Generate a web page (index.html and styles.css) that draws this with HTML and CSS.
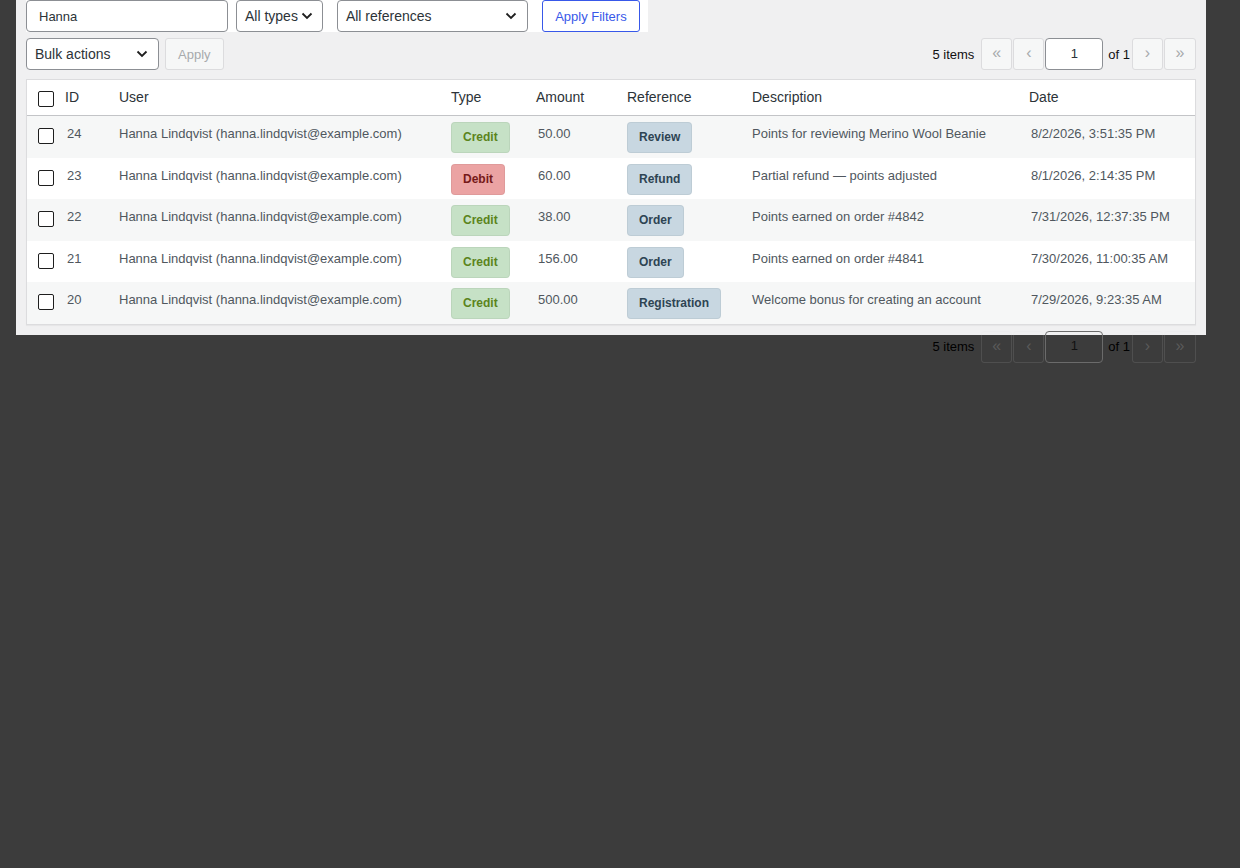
FILE: index.html
```html
<!DOCTYPE html>
<html>
<head>
    <meta charset="UTF-8">
    <meta name="viewport" content="width=device-width, initial-scale=1.0">
    <title>Points Transactions</title>
    <link rel="stylesheet" href="styles.css">
</head>
<body>
    <div class="wrap">
        <form class="filters">
            <input type="text" class="search" value="Hanna">
            <div class="select types">
                <span>All types</span>
                <svg width="12" height="8" viewBox="0 0 12 8"><path d="M1.5 1.5 L6 6 L10.5 1.5" fill="none" stroke="#1e1e1e" stroke-width="1.8"/></svg>
            </div>
            <div class="select refs">
                <span>All references</span>
                <svg width="12" height="8" viewBox="0 0 12 8"><path d="M1.5 1.5 L6 6 L10.5 1.5" fill="none" stroke="#1e1e1e" stroke-width="1.8"/></svg>
            </div>
            <button type="button" class="filter-btn">Apply Filters</button>
        </form>

        <div class="tablenav">
            <div class="bulk">
                <div class="select bulk-select">
                    <span>Bulk actions</span>
                    <svg width="12" height="8" viewBox="0 0 12 8"><path d="M1.5 1.5 L6 6 L10.5 1.5" fill="none" stroke="#1e1e1e" stroke-width="1.8"/></svg>
                </div>
                <button type="button" class="apply">Apply</button>
            </div>
            <div class="pages">
                <span class="count">5 items</span>
                <span class="nav-btn">&laquo;</span>
                <span class="nav-btn">&lsaquo;</span>
                <input type="text" class="page-input" value="1">
                <span class="of">of 1</span>
                <span class="nav-btn">&rsaquo;</span>
                <span class="nav-btn last">&raquo;</span>
            </div>
        </div>

        <table class="list">
            <colgroup>
                <col style="width: 30px">
                <col style="width: 52px">
                <col style="width: 332px">
                <col style="width: 87px">
                <col style="width: 89px">
                <col style="width: 125px">
                <col style="width: 279px">
                <col>
            </colgroup>
            <thead>
                <tr>
                    <th class="check-column"><input type="checkbox"></th>
                    <th class="sortable">ID</th>
                    <th>User</th>
                    <th>Type</th>
                    <th class="sortable">Amount</th>
                    <th>Reference</th>
                    <th>Description</th>
                    <th class="sortable">Date</th>
                </tr>
            </thead>
            <tbody>
                <tr>
                    <td class="check-column"><input type="checkbox"></td>
                    <td>24</td>
                    <td>Hanna Lindqvist (hanna.lindqvist@example.com)</td>
                    <td><span class="badge credit">Credit</span></td>
                    <td>50.00</td>
                    <td><span class="badge ref">Review</span></td>
                    <td>Points for reviewing Merino Wool Beanie</td>
                    <td>8/2/2026, 3:51:35 PM</td>
                </tr>
                <tr>
                    <td class="check-column"><input type="checkbox"></td>
                    <td>23</td>
                    <td>Hanna Lindqvist (hanna.lindqvist@example.com)</td>
                    <td><span class="badge debit">Debit</span></td>
                    <td>60.00</td>
                    <td><span class="badge ref">Refund</span></td>
                    <td>Partial refund &mdash; points adjusted</td>
                    <td>8/1/2026, 2:14:35 PM</td>
                </tr>
                <tr>
                    <td class="check-column"><input type="checkbox"></td>
                    <td>22</td>
                    <td>Hanna Lindqvist (hanna.lindqvist@example.com)</td>
                    <td><span class="badge credit">Credit</span></td>
                    <td>38.00</td>
                    <td><span class="badge ref">Order</span></td>
                    <td>Points earned on order #4842</td>
                    <td>7/31/2026, 12:37:35 PM</td>
                </tr>
                <tr>
                    <td class="check-column"><input type="checkbox"></td>
                    <td>21</td>
                    <td>Hanna Lindqvist (hanna.lindqvist@example.com)</td>
                    <td><span class="badge credit">Credit</span></td>
                    <td>156.00</td>
                    <td><span class="badge ref">Order</span></td>
                    <td>Points earned on order #4841</td>
                    <td>7/30/2026, 11:00:35 AM</td>
                </tr>
                <tr>
                    <td class="check-column"><input type="checkbox"></td>
                    <td>20</td>
                    <td>Hanna Lindqvist (hanna.lindqvist@example.com)</td>
                    <td><span class="badge credit">Credit</span></td>
                    <td>500.00</td>
                    <td><span class="badge ref">Registration</span></td>
                    <td>Welcome bonus for creating an account</td>
                    <td>7/29/2026, 9:23:35 AM</td>
                </tr>
            </tbody>
        </table>

        <div class="tablenav bottom">
            <div class="pages">
                <span class="count">5 items</span>
                <span class="nav-btn">&laquo;</span>
                <span class="nav-btn">&lsaquo;</span>
                <input type="text" class="page-input" value="1">
                <span class="of">of 1</span>
                <span class="nav-btn">&rsaquo;</span>
                <span class="nav-btn last">&raquo;</span>
            </div>
        </div>
    </div>
</body>
</html>
```

FILE: styles.css
```css
html {
    min-height: 100%;
    background-color: #3c3c3c;
}
body {
    margin: 0;
    min-height: 868px;
    background-color: #3c3c3c;
    font-family: "Liberation Sans", Arial, sans-serif;
    font-size: 13px;
    color: #3c434a;
}
.wrap {
    width: 1190px;
    height: 335px;
    margin-left: 16px;
    padding: 0 10px;
    box-sizing: border-box;
    background-color: #f0f0f1;
}

/* filter bar */
.filters {
    display: flex;
    width: max-content;
    height: 32px;
    margin: 0;
    padding-right: 8px;
    background-color: #fff;
}
.search {
    width: 202px;
    height: 32px;
    box-sizing: border-box;
    margin: 0;
    padding: 0 12px;
    border: 1px solid #8c8f94;
    border-radius: 4px;
    font-family: inherit;
    font-size: 13px;
    color: #2c3338;
    outline: none;
}
.select {
    display: flex;
    align-items: center;
    justify-content: space-between;
    height: 32px;
    box-sizing: border-box;
    padding: 0 10px 0 8px;
    border: 1px solid #8c8f94;
    border-radius: 4px;
    background-color: #fff;
    font-size: 14px;
    color: #2c3338;
}
.select svg {
    display: block;
    flex-shrink: 0;
}
.select.types {
    margin-left: 8px;
    padding-right: 9px;
    justify-content: flex-start;
    gap: 3px;
}
.select.refs {
    width: 191px;
    margin-left: 14px;
}
.filter-btn {
    width: 98px;
    height: 32px;
    margin-left: 14px;
    padding: 0;
    border: 1px solid #3858e9;
    border-radius: 3px;
    background-color: #fff;
    color: #3858e9;
    font-family: inherit;
    font-size: 13px;
}

/* nav rows */
.tablenav {
    display: flex;
    justify-content: space-between;
    align-items: center;
    height: 32px;
    margin-top: 6px;
}
.tablenav.bottom {
    justify-content: flex-end;
}
.bulk {
    display: flex;
    gap: 6px;
}
.bulk-select {
    width: 133px;
}
.apply {
    height: 32px;
    padding: 0 12px;
    border: 1px solid #dcdcde;
    border-radius: 3px;
    background-color: #f6f7f7;
    color: #a7aaad;
    font-family: inherit;
    font-size: 13px;
}
.pages {
    display: flex;
    align-items: center;
    gap: 1px;
}
.count {
    margin-right: 6px;
    color: #111;
}
.of {
    margin: 0 1px 0 4px;
    color: #111;
}
.nav-btn {
    display: flex;
    align-items: center;
    justify-content: center;
    width: 31px;
    height: 32px;
    box-sizing: border-box;
    padding-bottom: 2px;
    border: 1px solid #dcdcde;
    border-radius: 3px;
    background-color: #f6f7f7;
    color: #a7aaad;
    font-size: 16px;
}
.nav-btn.last {
    width: 32px;
}
.page-input {
    width: 58px;
    height: 32px;
    box-sizing: border-box;
    margin: 0;
    padding: 0 0 2px;
    border: 1px solid #8c8f94;
    border-radius: 4px;
    background-color: #fff;
    text-align: center;
    font-family: inherit;
    font-size: 13px;
    color: #2c3338;
}
.bottom .count,
.bottom .of {
    color: #000;
}
.bottom .nav-btn {
    background-color: transparent;
    border-color: rgba(220, 220, 222, .12);
    color: #5a5a5a;
}
.bottom .page-input {
    background-color: transparent;
    border-color: #6b6b6b;
    color: #111;
}

/* table */
.list {
    width: 100%;
    margin-top: 9px;
    table-layout: fixed;
    border-collapse: separate;
    border-spacing: 0;
    border: 1px solid #dcdcde;
    background-color: #fff;
    box-shadow: 0 1px 1px rgba(0, 0, 0, .04);
}
.list th {
    padding: 8px 10px;
    line-height: 19px;
    border-bottom: 1px solid #c3c4c7;
    text-align: left;
    vertical-align: top;
    font-weight: 400;
    font-size: 14px;
    color: #2c3338;
}
.list th.sortable {
    padding-left: 8px;
}
.list tbody tr {
    height: 41.5px;
}
.list tbody tr:nth-child(odd) {
    background-color: #f6f7f7;
}
.list td {
    padding: 8px 10px;
    line-height: 19.5px;
    vertical-align: top;
    color: #50575e;
    white-space: nowrap;
}
.list th.check-column {
    padding: 11px 0 0 11px;
}
.list td.check-column {
    padding: 12px 0 0 11px;
}
.check-column input {
    display: block;
    width: 16px;
    height: 16px;
    margin: 0;
    -webkit-appearance: none;
    appearance: none;
    border: 1px solid #1e1e1e;
    border-radius: 2px;
    background-color: #fff;
}

.badge {
    display: inline-block;
    vertical-align: top;
    height: 31px;
    box-sizing: border-box;
    margin: -2px 0 -10px;
    padding: 0 11px;
    line-height: 29px;
    border: 1px solid rgba(0, 0, 0, .05);
    border-radius: 4px;
    font-size: 12px;
    font-weight: 700;
}
.badge.credit {
    background-color: #c6e1c6;
    color: #5b841b;
}
.badge.debit {
    background-color: #eba3a3;
    color: #761919;
}
.badge.ref {
    background-color: #c8d7e1;
    color: #2e4453;
}
```
